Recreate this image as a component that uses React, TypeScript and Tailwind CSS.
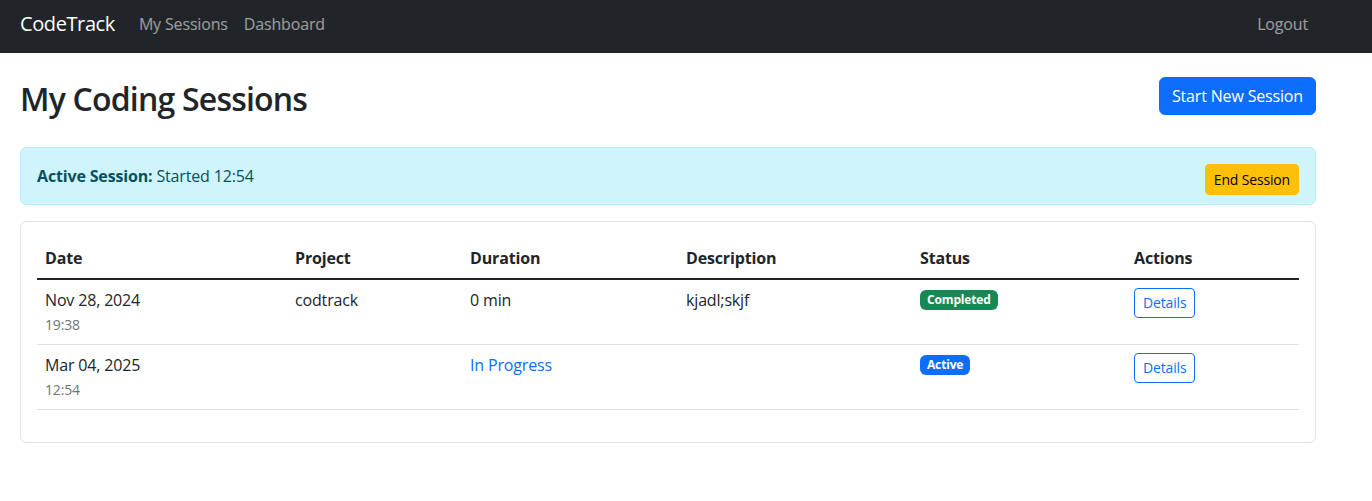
const sessions = [
  {
    date: "Nov 28, 2024",
    time: "19:38",
    project: "codtrack",
    duration: "0 min",
    description: "kjadl;skjf",
    status: "Completed",
  },
  {
    date: "Mar 04, 2025",
    time: "12:54",
    project: "",
    duration: null,
    description: "",
    status: "Active",
  },
];

const App = () => {
  return (
    <div className="min-h-screen bg-white text-[#212529] font-['Open_Sans',sans-serif] text-base tracking-[-0.01em]">
      <nav className="bg-[#212529] h-[53px]">
        <div className="w-[1296px] ml-5 h-full flex items-center justify-between pb-[6px]">
          <div className="flex items-center">
            <a className="text-white text-xl mr-4 leading-[30px] tracking-[-0.02em]">CodeTrack</a>
            <a className="text-white/55 px-2 leading-6">My Sessions</a>
            <a className="text-white/55 px-2 leading-6">Dashboard</a>
          </div>
          <a className="text-white/55 px-2 leading-6">Logout</a>
        </div>
      </nav>

      <main className="w-[1296px] ml-5">
        <div className="flex items-center justify-between mt-6 mb-8">
          <h2 className="text-[32px] font-semibold leading-[1.2] tracking-[-0.025em] mt-[3px] -mb-[3px]">
            My Coding Sessions
          </h2>
          <button className="bg-[#0d6efd] text-white rounded-md px-3 py-1.5 leading-6 border border-[#0d6efd]">
            Start New Session
          </button>
        </div>

        {/* active session banner */}
        <div className="bg-[#cff4fc] border border-[#b6effb] text-[#055160] rounded-md p-4 mb-4 flex items-start justify-between">
          <div className="leading-6">
            <strong className="font-bold">Active Session:</strong> Started 12:54
          </div>
          <button className="bg-[#ffc107] text-black text-sm rounded px-2 py-1 leading-[21px] border border-[#ffc107] -mb-[7px]">
            End Session
          </button>
        </div>

        <div className="border border-[#dee2e6] rounded-md p-4">
          <table className="w-full border-collapse mb-4 text-left">
            <thead>
              <tr className="border-b-2 border-[#212529]">
                <th className="w-[250px] px-2 py-2 font-bold leading-6">Date</th>
                <th className="w-[175px] px-2 py-2 font-bold leading-6">Project</th>
                <th className="w-[216px] px-2 py-2 font-bold leading-6">Duration</th>
                <th className="w-[234px] px-2 py-2 font-bold leading-6">Description</th>
                <th className="w-[214px] px-2 py-2 font-bold leading-6">Status</th>
                <th className="px-2 py-2 font-bold leading-6">Actions</th>
              </tr>
            </thead>
            <tbody>
              {sessions.map((s, i) => (
                <tr key={i} className="border-b border-[#dee2e6] align-top">
                  <td className="px-2 py-2 leading-6">
                    {s.date}
                    <br />
                    <small className="text-sm text-[#6c757d]">{s.time}</small>
                  </td>
                  <td className="px-2 py-2 leading-6">{s.project}</td>
                  <td className="px-2 py-2 leading-6">
                    {s.duration ? s.duration : <span className="text-[#0d6efd]">In Progress</span>}
                  </td>
                  <td className="px-2 py-2 leading-6">{s.description}</td>
                  <td className="px-2 py-2 leading-6">
                    <span
                      className={
                        s.status === "Completed"
                          ? "inline-block bg-[#198754] text-white text-xs font-bold leading-none px-[7px] py-[4px] rounded-md align-[2px]"
                          : "inline-block bg-[#0d6efd] text-white text-xs font-bold leading-none px-[7px] py-[4px] rounded-md align-[2px]"
                      }
                    >
                      {s.status}
                    </span>
                  </td>
                  <td className="px-2 py-2">
                    <button className="border border-[#0d6efd] text-[#0d6efd] text-sm rounded px-2 py-1 leading-[20px]">
                      Details
                    </button>
                  </td>
                </tr>
              ))}
            </tbody>
          </table>
        </div>
      </main>
    </div>
  );
};

export default App;
